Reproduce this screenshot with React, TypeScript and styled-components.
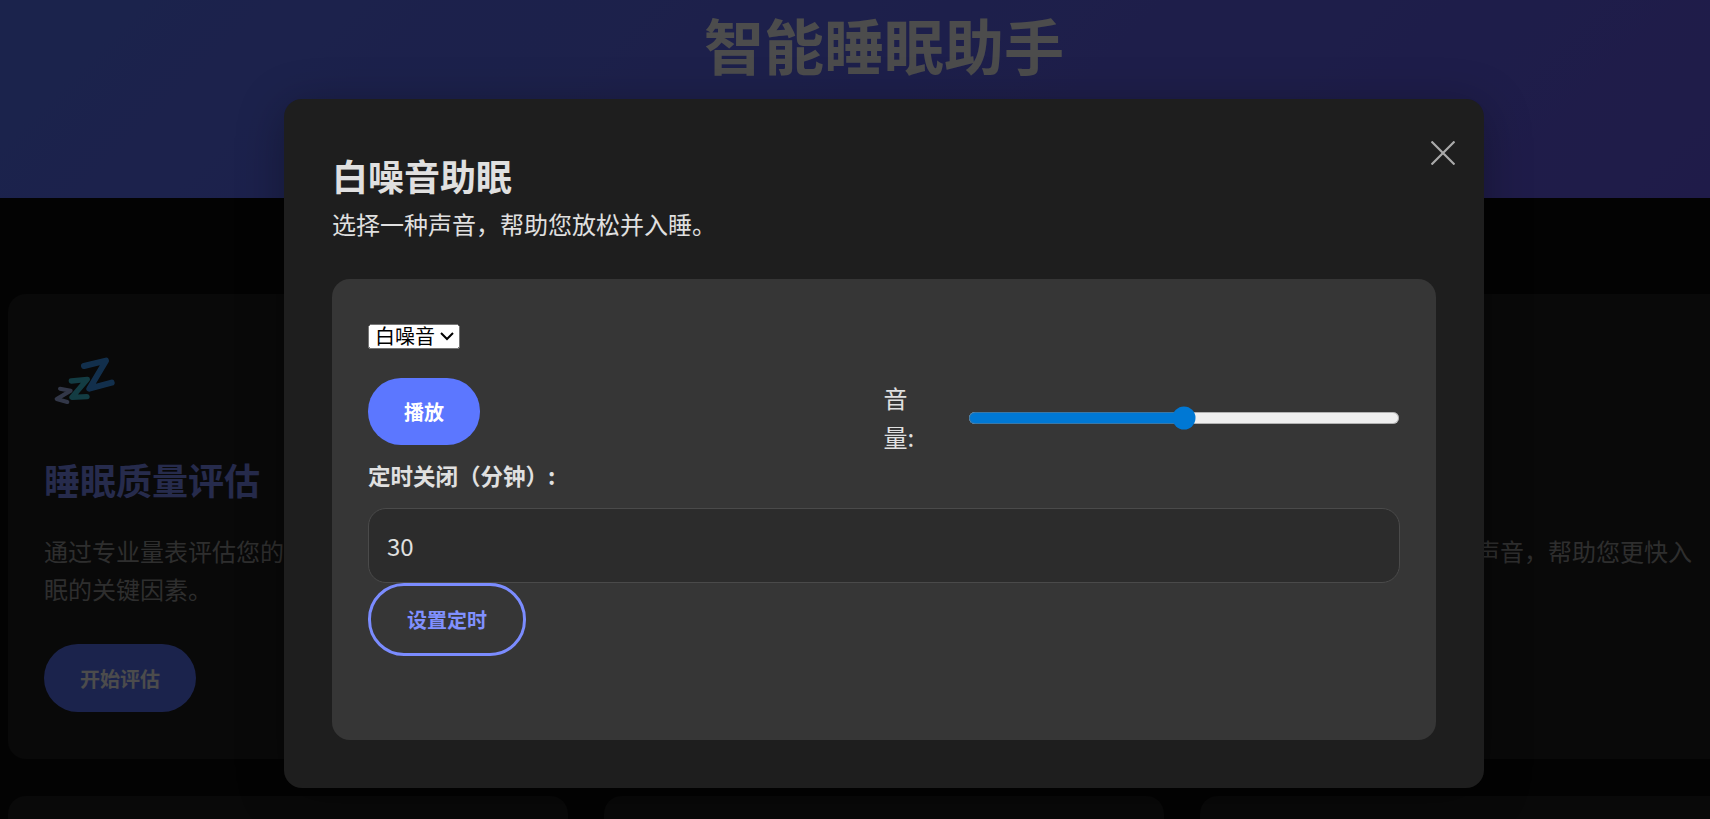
import React, { FC } from "react";
import styled, { createGlobalStyle } from "styled-components";

const GlobalStyle = createGlobalStyle`
  html, body {
    margin: 0;
    padding: 0;
    height: 100%;
    overflow: hidden;
    background: #0c0c0c;
  }
  body {
    font-family: "Noto Sans CJK SC", "Noto Sans", sans-serif;
    line-height: 1.6;
  }
`;

type Feature = {
  title: string;
  text: string;
  action: string;
};

const features: Feature[] = [
  {
    title: "睡眠质量评估",
    text: "通过专业量表评估您的睡眠质量，了解影响睡眠的关键因素。",
    action: "开始评估",
  },
  {
    title: "睡眠日记",
    text: "记录每天的作息与感受，发现规律并养成更好的睡眠习惯。",
    action: "打开日记",
  },
  {
    title: "白噪音助眠",
    text: "提供多种白噪音和自然声音，帮助您更快入睡。",
    action: "开始聆听",
  },
];

const SleepIcon: FC = () => (
  <IconSvg viewBox="0 0 330 240" aria-hidden="true">
    <g fill="none" strokeLinecap="round" strokeLinejoin="round">
      <path d="M162 78 L228 62 L178 146 L245 128" stroke="#3f9fff" strokeWidth="18" />
      <path d="M124 123 L172 118 L126 172 L171 170" stroke="#40c8e0" strokeWidth="16" />
      <path d="M90 146 L122 152 L80 177 L112 186" stroke="#a8b8f0" strokeWidth="12" />
    </g>
  </IconSvg>
);

const CloseIcon: FC = () => (
  <svg width="24" height="24" viewBox="0 0 24 24" aria-hidden="true">
    <path d="M0.5 0.5 L23.5 23.5 M23.5 0.5 L0.5 23.5" stroke="#aaaaaa" strokeWidth="2.2" fill="none" />
  </svg>
);

const App: FC = () => {
  return (
    <Page>
      <GlobalStyle />
      <Hero>
        <HeroTitle>智能睡眠助手</HeroTitle>
      </Hero>
      <FeatureGrid>
        {features.map((item) => (
          <FeatureCard key={item.title}>
            <IconSlot>
              <SleepIcon />
            </IconSlot>
            <FeatureTitle>{item.title}</FeatureTitle>
            <FeatureText>{item.text}</FeatureText>
            <FeatureButton>{item.action}</FeatureButton>
          </FeatureCard>
        ))}
        <FeatureCard />
        <FeatureCard />
        <FeatureCard />
      </FeatureGrid>

      <Overlay>
        <Modal>
          <CloseButton aria-label="关闭">
            <CloseIcon />
          </CloseButton>
          <ModalTitle>白噪音助眠</ModalTitle>
          <ModalSubtitle>选择一种声音，帮助您放松并入睡。</ModalSubtitle>
          <Player>
            <SoundSelect defaultValue="white">
              <option value="white">白噪音</option>
              <option value="rain">雨声</option>
              <option value="wave">海浪</option>
            </SoundSelect>
            <Controls>
              <PlayButton>播放</PlayButton>
              <VolumeGroup>
                <VolumeLabel>音量:</VolumeLabel>
                <VolumeSlider type="range" min={0} max={100} defaultValue={50} />
              </VolumeGroup>
            </Controls>
            <TimerLabel>定时关闭（分钟）:</TimerLabel>
            <TimerInput type="number" defaultValue={30} />
            <TimerButton>设置定时</TimerButton>
          </Player>
        </Modal>
      </Overlay>
    </Page>
  );
};

const Page = styled.div`
  position: relative;
  width: 1768px;
  height: 819px;
  overflow: hidden;
`;

const Hero = styled.header`
  height: 198px;
  background: linear-gradient(135deg, #5c77ff, #6a5cf5);
  text-align: center;
`;

const HeroTitle = styled.h1`
  margin: 0;
  font-size: 60px;
  font-weight: 700;
  line-height: 88px;
  color: #ffffff;
`;

const FeatureGrid = styled.main`
  display: grid;
  grid-template-columns: repeat(3, 560px);
  grid-auto-rows: 465px;
  gap: 37px 36px;
  padding: 96px 8px 0;
`;

const FeatureCard = styled.section`
  box-sizing: border-box;
  padding: 48px 36px;
  background: #1e1e1e;
  border-radius: 18px;
`;

const IconSlot = styled.div`
  height: 110px;
  margin-left: -14px;
`;

const IconSvg = styled.svg`
  display: block;
  width: 110px;
  height: 80px;
  margin-top: -2px;
`;

const FeatureTitle = styled.h3`
  margin: 0 0 24px;
  font-size: 36px;
  font-weight: 700;
  line-height: 58px;
  color: #8090ff;
`;

const FeatureText = styled.p`
  margin: 0 0 36px;
  font-size: 24px;
  line-height: 38px;
  color: #9a9a9a;
`;

const FeatureButton = styled.button`
  height: 68px;
  padding: 0 36px;
  border: none;
  border-radius: 34px;
  background: #5c77ff;
  color: #ffffff;
  font-family: inherit;
  font-size: 20px;
  font-weight: 700;
`;

const Overlay = styled.div`
  position: absolute;
  inset: 0;
  display: flex;
  justify-content: center;
  align-items: flex-start;
  padding-top: 99px;
  background: rgba(0, 0, 0, 0.7);
`;

const Modal = styled.div`
  position: relative;
  box-sizing: border-box;
  width: 1200px;
  height: 689px;
  padding: 48px;
  background: #1e1e1e;
  border-radius: 18px;
  box-shadow: 0 8px 48px rgba(0, 0, 0, 0.3);
  color: #e0e0e0;
`;

const CloseButton = styled.button`
  position: absolute;
  top: 42px;
  right: 29px;
  display: flex;
  padding: 0;
  border: none;
  background: none;
`;

const ModalTitle = styled.h2`
  margin: 0 0 2px;
  font-size: 36px;
  font-weight: 700;
  line-height: 56px;
`;

const ModalSubtitle = styled.p`
  margin: 0 0 36px;
  font-size: 24px;
  line-height: 38px;
`;

const Player = styled.div`
  box-sizing: border-box;
  height: 461px;
  padding: 45px 36px 0;
  background: #363636;
  border-radius: 18px;
`;

const SoundSelect = styled.select`
  display: block;
  zoom: 1.5;
  box-sizing: border-box;
  height: 16.7px;
  margin-bottom: 19.3px;
  padding: 0;
  font-family: "Liberation Sans", "Noto Sans CJK SC", sans-serif;
  font-size: 13.333px;
`;

const Controls = styled.div`
  display: flex;
  justify-content: space-between;
  align-items: flex-start;
`;

const PlayButton = styled.button`
  width: 112px;
  height: 67px;
  border: none;
  border-radius: 33px;
  background: #5c77ff;
  color: #ffffff;
  font-family: inherit;
  font-size: 20px;
  font-weight: 700;
`;

const VolumeGroup = styled.div`
  display: flex;
  align-items: center;
  gap: 36.5px;
`;

const VolumeLabel = styled.label`
  width: 48px;
  flex-shrink: 0;
  font-size: 24px;
  line-height: 39px;
`;

const VolumeSlider = styled.input`
  zoom: 1.5;
  flex-shrink: 0;
  width: 288px;
  margin: 1px 0 0;
  accent-color: #0078d4;
`;

const TimerLabel = styled.label`
  display: block;
  margin: 1px 0 15px;
  font-size: 22.5px;
  font-weight: 700;
  line-height: 36px;
`;

const TimerInput = styled.input`
  display: block;
  box-sizing: border-box;
  width: 100%;
  height: 75px;
  padding: 0 18px;
  background: #2c2c2c;
  border: 1.5px solid #4a4a4a;
  border-radius: 18px;
  color: #e0e0e0;
  font-family: inherit;
  font-size: 24px;
  appearance: textfield;
`;

const TimerButton = styled.button`
  display: block;
  box-sizing: border-box;
  width: 158px;
  height: 73px;
  border: 3px solid #7b8cff;
  border-radius: 36px;
  background: transparent;
  color: #8090ff;
  font-family: inherit;
  font-size: 20px;
  font-weight: 700;
`;

export default App;
